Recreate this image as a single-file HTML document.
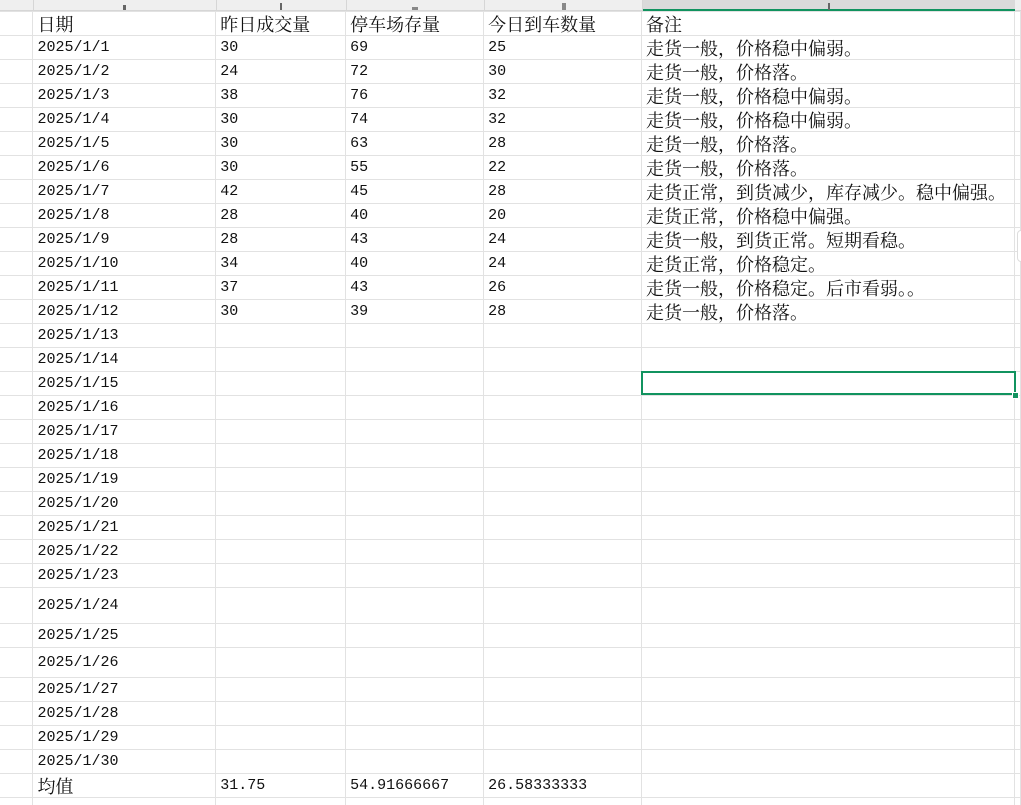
<!DOCTYPE html>
<html><head><meta charset="utf-8">
<style>
html,body{margin:0;padding:0;background:#fff;width:1021px;height:805px;overflow:hidden;position:relative}
#hdr{position:absolute;left:0;top:0;width:1021px;height:11px;background:#efefef;border-bottom:1px solid #d6d6d6;box-sizing:border-box}
.vl{position:absolute;top:0;width:1px;height:11px;background:#d6d6d6}
.tk{position:absolute;top:3px;width:2px;height:7px;background:#666}
#sel{position:absolute;left:642px;top:0;width:373px;height:11px;background:#dadada;border-bottom:2px solid #11935f;box-sizing:border-box}
table{position:absolute;left:0;top:11px;border-collapse:collapse;table-layout:fixed;font-family:"Liberation Mono","Noto Serif CJK SC",monospace;font-size:15px;color:#111}
td{border:1px solid #e2e2e2;padding:0 0 0 4px;white-space:nowrap;overflow:hidden;vertical-align:middle;line-height:18px}
td:first-child{border-left:none}
.c{font-family:"Noto Serif CJK SC","Liberation Serif",serif;font-size:18px}
tr{height:24px}
#box{position:absolute;left:641px;top:371px;width:375px;height:24px;border:2px solid #11935f;box-sizing:border-box}
#hd{position:absolute;left:1012px;top:392px;width:5px;height:5px;background:#11935f;border:1px solid #fff}
#tab{position:absolute;left:1017px;top:230px;width:10px;height:30px;border:1px solid #ddd;border-radius:4px;background:#fff}
</style></head><body>
<div id="hdr"></div>
<div id="sel"></div>
<div class="vl" style="left:33px"></div><div class="vl" style="left:216px"></div><div class="vl" style="left:346px"></div><div class="vl" style="left:484px"></div><div class="vl" style="left:642px"></div>
<div class="tk" style="left:123px;width:3px;top:5px;height:5px"></div>
<div class="tk" style="left:280px"></div>
<div class="tk" style="left:412px;width:6px;top:7px;height:3px;background:#888"></div>
<div class="tk" style="left:562px;width:4px;background:#888"></div>
<div class="tk" style="left:828px"></div>
<table>
<colgroup><col style="width:33px"><col style="width:183px"><col style="width:130px"><col style="width:138px"><col style="width:158px"><col style="width:373px"><col style="width:6px"></colgroup>
<tr><td></td><td class="c">日期</td><td class="c">昨日成交量</td><td class="c">停车场存量</td><td class="c">今日到车数量</td><td class="c">备注</td><td></td></tr>
<tr><td></td><td>2025/1/1</td><td>30</td><td>69</td><td>25</td><td class="c">走货一般，价格稳中偏弱。</td><td></td></tr>
<tr><td></td><td>2025/1/2</td><td>24</td><td>72</td><td>30</td><td class="c">走货一般，价格落。</td><td></td></tr>
<tr><td></td><td>2025/1/3</td><td>38</td><td>76</td><td>32</td><td class="c">走货一般，价格稳中偏弱。</td><td></td></tr>
<tr><td></td><td>2025/1/4</td><td>30</td><td>74</td><td>32</td><td class="c">走货一般，价格稳中偏弱。</td><td></td></tr>
<tr><td></td><td>2025/1/5</td><td>30</td><td>63</td><td>28</td><td class="c">走货一般，价格落。</td><td></td></tr>
<tr><td></td><td>2025/1/6</td><td>30</td><td>55</td><td>22</td><td class="c">走货一般，价格落。</td><td></td></tr>
<tr><td></td><td>2025/1/7</td><td>42</td><td>45</td><td>28</td><td class="c">走货正常，到货减少，库存减少。稳中偏强。</td><td></td></tr>
<tr><td></td><td>2025/1/8</td><td>28</td><td>40</td><td>20</td><td class="c">走货正常，价格稳中偏强。</td><td></td></tr>
<tr><td></td><td>2025/1/9</td><td>28</td><td>43</td><td>24</td><td class="c">走货一般，到货正常。短期看稳。</td><td></td></tr>
<tr><td></td><td>2025/1/10</td><td>34</td><td>40</td><td>24</td><td class="c">走货正常，价格稳定。</td><td></td></tr>
<tr><td></td><td>2025/1/11</td><td>37</td><td>43</td><td>26</td><td class="c">走货一般，价格稳定。后市看弱。。</td><td></td></tr>
<tr><td></td><td>2025/1/12</td><td>30</td><td>39</td><td>28</td><td class="c">走货一般，价格落。</td><td></td></tr>
<tr><td></td><td>2025/1/13</td><td></td><td></td><td></td><td></td><td></td></tr>
<tr><td></td><td>2025/1/14</td><td></td><td></td><td></td><td></td><td></td></tr>
<tr><td></td><td>2025/1/15</td><td></td><td></td><td></td><td></td><td></td></tr>
<tr><td></td><td>2025/1/16</td><td></td><td></td><td></td><td></td><td></td></tr>
<tr><td></td><td>2025/1/17</td><td></td><td></td><td></td><td></td><td></td></tr>
<tr><td></td><td>2025/1/18</td><td></td><td></td><td></td><td></td><td></td></tr>
<tr><td></td><td>2025/1/19</td><td></td><td></td><td></td><td></td><td></td></tr>
<tr><td></td><td>2025/1/20</td><td></td><td></td><td></td><td></td><td></td></tr>
<tr><td></td><td>2025/1/21</td><td></td><td></td><td></td><td></td><td></td></tr>
<tr><td></td><td>2025/1/22</td><td></td><td></td><td></td><td></td><td></td></tr>
<tr><td></td><td>2025/1/23</td><td></td><td></td><td></td><td></td><td></td></tr>
<tr style="height:36px"><td></td><td>2025/1/24</td><td></td><td></td><td></td><td></td><td></td></tr>
<tr><td></td><td>2025/1/25</td><td></td><td></td><td></td><td></td><td></td></tr>
<tr style="height:30px"><td></td><td>2025/1/26</td><td></td><td></td><td></td><td></td><td></td></tr>
<tr><td></td><td>2025/1/27</td><td></td><td></td><td></td><td></td><td></td></tr>
<tr><td></td><td>2025/1/28</td><td></td><td></td><td></td><td></td><td></td></tr>
<tr><td></td><td>2025/1/29</td><td></td><td></td><td></td><td></td><td></td></tr>
<tr><td></td><td>2025/1/30</td><td></td><td></td><td></td><td></td><td></td></tr>
<tr><td></td><td class="c">均值</td><td>31.75</td><td>54.91666667</td><td>26.58333333</td><td></td><td></td></tr>
<tr><td></td><td></td><td></td><td></td><td></td><td></td><td></td></tr>
</table>
<div id="box"></div><div id="hd"></div>
<div id="tab"></div>
</body></html>
